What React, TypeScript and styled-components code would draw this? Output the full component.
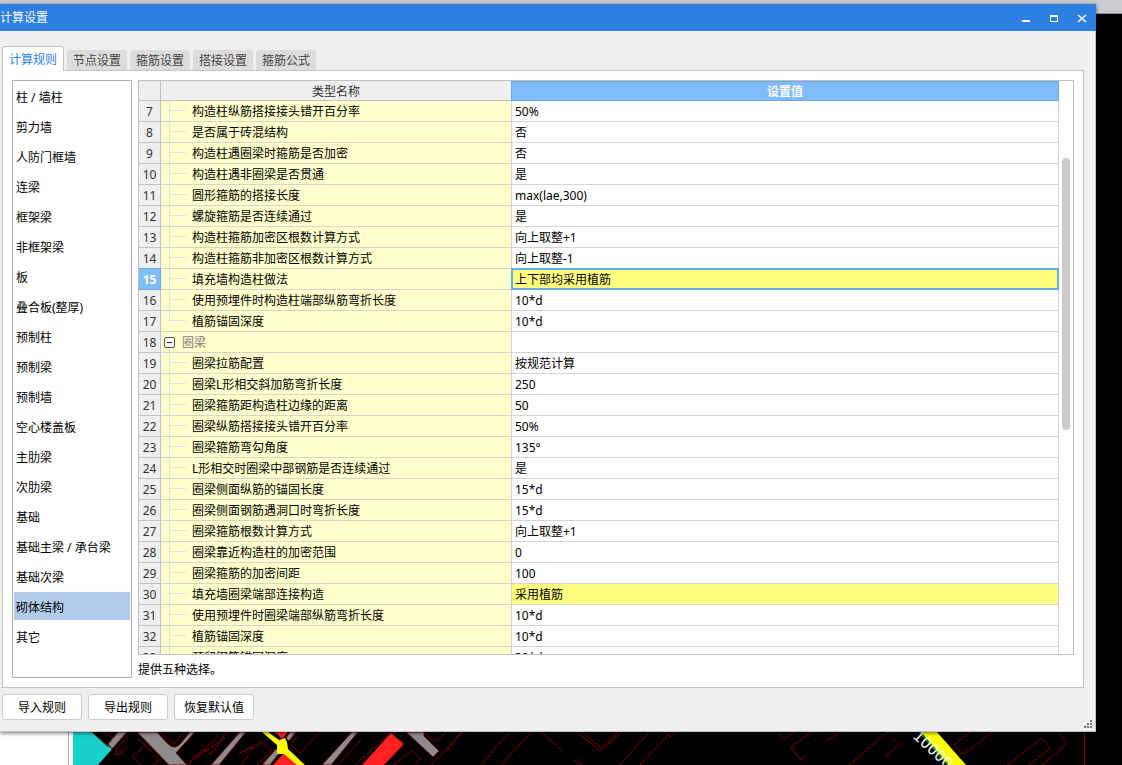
import React from "react";
import styled, { createGlobalStyle, css } from "styled-components";

const Global = createGlobalStyle`
  * { box-sizing: border-box; }
  html, body { margin: 0; height: 100%; }
  body, button, table {
    font-family: "Noto Sans", "Noto Sans CJK SC", sans-serif;
    font-size: 12px;
    line-height: 16px;
    color: #000;
  }
  button { margin: 0; padding: 0; border: 0; background: none; }
`;

const Desktop = styled.div`
  display: flex;
  flex-direction: column;
  height: 100vh;
  min-height: 400px;
  overflow: hidden;
  background: linear-gradient(#c9ccd1 0 13px, #8f9194 13px 14px, #000 14px);
`;

const Dialog = styled.section`
  flex: 1;
  min-height: 0;
  display: flex;
  flex-direction: column;
  margin: 4px 26px 0 0;
  background: #efefef;
  box-shadow: 0 1px 4px rgba(0, 0, 0, 0.6);
  position: relative;
`;

const TitleBar = styled.header`
  display: flex;
  align-items: center;
  justify-content: space-between;
  height: 27px;
  flex: none;
  padding-right: 8px;
  background: #2d80e2;
  color: #fff;
`;

const Title = styled.h1`
  margin: 0;
  font-size: 12px;
  font-weight: 400;
`;

const WindowButtons = styled.div`
  display: flex;
  gap: 16px;
`;

const WindowButton = styled.button`
  width: 12px;
  height: 12px;
  svg { display: block; }
`;

const Body = styled.div`
  flex: 1;
  min-height: 0;
  display: flex;
  flex-direction: column;
  padding: 15px 11px 11px 2px;
  border: solid #bfc3ca;
  border-width: 0 1px 1px 0;
`;

const Tabs = styled.div`
  display: flex;
  align-items: flex-end;
  gap: 3px;
`;

const Tab = styled.button<{ $active?: boolean }>`
  width: 60px;
  height: 20px;
  padding-top: 2px;
  border-radius: 3px 3px 0 0;
  background: #dcdcdc;
  color: #444;
  ${(p) =>
    p.$active &&
    css`
      width: 62px;
      height: 25px;
      margin-bottom: -1px;
      border: 1px solid #c0c3cb;
      border-bottom: 0;
      background: #fff;
      color: #2d80e2;
      z-index: 1;
    `}
`;

const Panel = styled.div`
  flex: 1;
  min-height: 0;
  display: flex;
  gap: 6px;
  padding: 9px;
  border: 1px solid #c3c5cb;
  background: #fff;
`;

const Sidebar = styled.nav`
  flex: none;
  display: flex;
  flex-direction: column;
  gap: 2px;
  width: 120px;
  padding: 1px;
  border: 1px solid #adadad;
  overflow: hidden;
`;

const SidebarItem = styled.button<{ $selected: boolean }>`
  flex: none;
  height: 28px;
  padding: 3px 2px 0;
  text-align: left;
  white-space: nowrap;
  background: ${(p) => (p.$selected ? "#b1cbec" : "transparent")};
`;

const Content = styled.div`
  flex: 1;
  min-width: 0;
  display: flex;
  flex-direction: column;
`;

const GridFrame = styled.div`
  flex: 1;
  min-height: 0;
  display: flex;
  border: 1px solid #c0c0c0;
`;

const GridView = styled.div`
  flex: 1;
  min-width: 0;
  overflow: hidden;
`;

const Table = styled.table`
  width: 100%;
  table-layout: fixed;
  border-collapse: separate;
  border-spacing: 0;
`;

const NumberCol = styled.col`
  width: 22px;
`;

const NameCol = styled.col`
  width: 351px;
`;

const HeadCell = styled.th<{ $current?: boolean }>`
  height: 20px;
  padding: 2px 0 0;
  border: solid #c2c2c2;
  border-width: 0 1px 1px 0;
  background: #efefef;
  color: #333;
  font-weight: 400;
  ${(p) =>
    p.$current &&
    css`
      border-color: #68a9e8;
      background: #80bbfa;
      box-shadow: -1px 0 #68a9e8, inset 0 1px #68a9e8;
      color: #fff;
      font-weight: 700;
    `}
`;

const RowNumber = styled.th<{ $current: boolean }>`
  height: 21px;
  padding: 1px 0 0;
  border: solid #c2c2c2;
  border-width: 0 1px 1px 0;
  background: #efefef;
  color: #333;
  font-weight: 400;
  ${(p) =>
    p.$current &&
    css`
      border-color: #68a9e8;
      background: #80bbfa;
      box-shadow: 0 -1px #68a9e8;
      color: #fff;
      font-weight: 700;
    `}
`;

const line = "linear-gradient(#e0e0e4, #e0e0e4) no-repeat";

const branches = {
  middle: `${line} 8px 0 / 1px 100%, ${line} 8px 9px / 17px 1px, #ffffcc`,
  last: `${line} 8px 0 / 1px 10px, ${line} 8px 9px / 17px 1px, #ffffcc`,
  group: `${line} 8px 16px / 1px 5px, #ffffcc`,
};

const NameCell = styled.td<{ $branch: keyof typeof branches }>`
  height: 21px;
  padding: 1px 0 0 ${(p) => (p.$branch === "group" ? 3 : 31)}px;
  border: solid #d4d4d4;
  border-width: 0 1px 1px 0;
  background: ${(p) => branches[p.$branch]};
  white-space: nowrap;
  overflow: hidden;
`;

const Group = styled.div`
  display: flex;
  align-items: center;
  gap: 7px;
  color: #808080;
`;

const Toggle = styled.button`
  width: 11px;
  height: 11px;
  border: 1px solid #555;
  border-radius: 2px;
  background: #fff;
  svg { display: block; }
`;

const ValueCell = styled.td<{ $changed: boolean; $current: boolean }>`
  height: 21px;
  padding: 1px 0 0 3px;
  border: solid #d4d4d4;
  border-width: 0 1px 1px 0;
  background: ${(p) => (p.$changed ? "#ffff80" : "#fff")};
  white-space: nowrap;
  ${(p) =>
    p.$current &&
    css`
      position: relative;
      &::after {
        content: "";
        position: absolute;
        inset: -1px;
        border: 2px solid #68a9e8;
      }
    `}
`;

const ScrollTrack = styled.div`
  flex: none;
  width: 14px;
  padding: 77px 3px 0;
`;

const ScrollThumb = styled.div`
  width: 8px;
  height: 272px;
  border-radius: 4px;
  background: #cbcbcb;
`;

const Hint = styled.p`
  flex: none;
  margin: 0;
  padding: 7px 0 0;
`;

const Actions = styled.div`
  display: flex;
  gap: 6px;
  padding-top: 6px;
`;

const ActionButton = styled.button`
  width: 80px;
  height: 26px;
  padding-top: 2px;
  border: 1px solid #c9ccd1;
  border-radius: 3px;
  background: #fff;
`;

const Grip = styled.svg`
  position: absolute;
  right: 4px;
  bottom: 4px;
`;

const Backdrop = styled.div`
  flex: none;
  display: flex;
  height: 33px;
`;

const SidePane = styled.div`
  flex: none;
  width: 73px;
  padding-right: 4px;
  background: #fff;
  &::before {
    content: "";
    display: block;
    height: 100%;
    border-right: 1px solid #b0b0b0;
  }
`;

const Drawing = styled.svg`
  flex: 1;
  min-width: 0;
  height: 33px;
  background: #000;
`;

const categories = [
  "柱 / 墙柱", "剪力墙", "人防门框墙", "连梁", "框架梁", "非框架梁", "板",
  "叠合板(整厚)", "预制柱", "预制梁", "预制墙", "空心楼盖板", "主肋梁", "次肋梁",
  "基础", "基础主梁 / 承台梁", "基础次梁", "砌体结构", "其它",
];

type Row = { name: string; value: string; changed?: boolean; branch?: keyof typeof branches };

const FIRST_ROW = 7;
const CURRENT_ROW = 15;

const rows: Row[] = [
  { name: "构造柱纵筋搭接接头错开百分率", value: "50%" },
  { name: "是否属于砖混结构", value: "否" },
  { name: "构造柱遇圈梁时箍筋是否加密", value: "否" },
  { name: "构造柱遇非圈梁是否贯通", value: "是" },
  { name: "圆形箍筋的搭接长度", value: "max(lae,300)" },
  { name: "螺旋箍筋是否连续通过", value: "是" },
  { name: "构造柱箍筋加密区根数计算方式", value: "向上取整+1" },
  { name: "构造柱箍筋非加密区根数计算方式", value: "向上取整-1" },
  { name: "填充墙构造柱做法", value: "上下部均采用植筋", changed: true },
  { name: "使用预埋件时构造柱端部纵筋弯折长度", value: "10*d" },
  { name: "植筋锚固深度", value: "10*d", branch: "last" },
  { name: "圈梁", value: "", branch: "group" },
  { name: "圈梁拉筋配置", value: "按规范计算" },
  { name: "圈梁L形相交斜加筋弯折长度", value: "250" },
  { name: "圈梁箍筋距构造柱边缘的距离", value: "50" },
  { name: "圈梁纵筋搭接接头错开百分率", value: "50%" },
  { name: "圈梁箍筋弯勾角度", value: "135°" },
  { name: "L形相交时圈梁中部钢筋是否连续通过", value: "是" },
  { name: "圈梁侧面纵筋的锚固长度", value: "15*d" },
  { name: "圈梁侧面钢筋遇洞口时弯折长度", value: "15*d" },
  { name: "圈梁箍筋根数计算方式", value: "向上取整+1" },
  { name: "圈梁靠近构造柱的加密范围", value: "0" },
  { name: "圈梁箍筋的加密间距", value: "100" },
  { name: "填充墙圈梁端部连接构造", value: "采用植筋", changed: true },
  { name: "使用预埋件时圈梁端部纵筋弯折长度", value: "10*d" },
  { name: "植筋锚固深度", value: "10*d" },
  { name: "预留钢筋锚固深度", value: "30*d" },
];

function SitePlan() {
  return (
    <Drawing viewBox="73 732 1049 33" preserveAspectRatio="xMinYMin slice" aria-hidden="true">
      <path d="M73 732H92L107 745L112 749L98 765H73Z" fill="#18d0c8" />
      <g fill="#8c8c8c" stroke="#7a0000" strokeWidth="1">
        <path d="M137 732H157L167 743Q175 751 181 743L190 732H195L176 753L187 765H169Z" />
        <path d="M118 732H127L112 749L108 744Z" />
        <path d="M240 732H246L219 765H211Z" />
        <path d="M352 732H358L331 765H322Z" />
        <path d="M406 732H424V736L439 751L433 757Z" />
        <path d="M280 752L270 765H262L276 749Z" />
        <path d="M290 732H296L289 741L286 738Z" />
      </g>
      <path d="M275 732H288L282 739ZM391 733L404 744L384 765H362Z" fill="#ff2020" />
      <path d="M284 753L289 753L301 765H273Z" fill="#ff2020" />
      <path d="M262 732H268L279 740L285 738L287 742L288 749L305 765H297L284 754H277V745Z" fill="#ffff00" />
      <path d="M921 732H937L966 765H948Z" fill="#ffff00" />
      <path d="M920 732L948 765" stroke="#17852a" strokeWidth="2" fill="none" />
      <g fill="none" stroke="#800000" strokeWidth="1">
        <path d="M92 732L108 747M104 732L113 738L118 732M138 739L145 745L132 757L141 765M128 736L117 748L115 755L121 753L127 747M119 750L124 755M145 745L159 760L154 765M138 752L145 745M160 732L174 744L184 732M188 765L203 748L211 755L226 732M190 761L225 738M197 758L218 735M239 753L254 747L241 765M240 753L262 742L272 750L257 765" />
        <path d="M297 736L291 745L300 753L320 732M338 765L361 740M355 765L392 732M425 732L435 742L446 732M393 765L412 751L421 759L414 765M431 765L463 732M447 751L461 732" />
        <path d="M481 765L509 732M501 765L531 732M541 732L563 751M574 760L582 765M577 732L600 751L622 732M583 732L601 748L618 732M620 765L649 732M640 765L671 732M664 732L670 737L675 732" />
        <path d="M778 732L784 739L794 732M812 732L791 747L801 760L806 756M815 740L816 740M826 741L840 732M849 765L888 732M885 756L901 743M893 739L895 740M954 745L963 755L992 732M954 745L970 732M1007 765L1042 738L1050 748L1029 765M1042 765L1067 744L1058 732M1084.500 732V765" />
      </g>
      <text x="912" y="737" transform="rotate(43 912 737)" fill="#fff" fontSize="15" fontFamily="DejaVu Sans, sans-serif">
        10000
      </text>
    </Drawing>
  );
}

export default function App() {
  return (
    <>
      <Global />
      <Desktop>
        <Dialog aria-label="计算设置">
          <TitleBar>
            <Title>计算设置</Title>
            <WindowButtons>
              <WindowButton aria-label="最小化">
                <svg width="12" height="12"><path d="M2 8h8v2H2z" fill="#fff" /></svg>
              </WindowButton>
              <WindowButton aria-label="最大化">
                <svg width="12" height="12"><path fillRule="evenodd" d="M2 3h8v7H2zM3 5v4h6V5z" fill="#fff" /></svg>
              </WindowButton>
              <WindowButton aria-label="关闭">
                <svg width="12" height="12"><path d="M2 3L10 10M10 3L2 10" stroke="#fff" strokeWidth="1.500" /></svg>
              </WindowButton>
            </WindowButtons>
          </TitleBar>
          <Body>
            <Tabs role="tablist">
              <Tab role="tab" aria-selected $active>计算规则</Tab>
              <Tab role="tab">节点设置</Tab>
              <Tab role="tab">箍筋设置</Tab>
              <Tab role="tab">搭接设置</Tab>
              <Tab role="tab">箍筋公式</Tab>
            </Tabs>
            <Panel role="tabpanel">
              <Sidebar>
                {categories.map((c) => (
                  <SidebarItem key={c} $selected={c === "砌体结构"}>{c}</SidebarItem>
                ))}
              </Sidebar>
              <Content>
                <GridFrame>
                  <GridView>
                    <Table>
                      <colgroup>
                        <NumberCol />
                        <NameCol />
                        <col />
                      </colgroup>
                      <thead>
                        <tr>
                          <HeadCell />
                          <HeadCell scope="col">类型名称</HeadCell>
                          <HeadCell scope="col" $current>设置值</HeadCell>
                        </tr>
                      </thead>
                      <tbody>
                        {rows.map((r, i) => {
                          const n = FIRST_ROW + i;
                          const current = n === CURRENT_ROW;
                          return (
                            <tr key={n}>
                              <RowNumber scope="row" $current={current}>{n}</RowNumber>
                              <NameCell $branch={r.branch ?? "middle"}>
                                {r.branch === "group" ? (
                                  <Group>
                                    <Toggle aria-label="折叠" aria-expanded>
                                      <svg width="9" height="9"><path d="M2 4h5v1H2z" fill="#222" /></svg>
                                    </Toggle>
                                    {r.name}
                                  </Group>
                                ) : (
                                  r.name
                                )}
                              </NameCell>
                              <ValueCell $changed={!!r.changed} $current={current}>{r.value}</ValueCell>
                            </tr>
                          );
                        })}
                      </tbody>
                    </Table>
                  </GridView>
                  <ScrollTrack>
                    <ScrollThumb />
                  </ScrollTrack>
                </GridFrame>
                <Hint>提供五种选择。</Hint>
              </Content>
            </Panel>
            <Actions>
              <ActionButton>导入规则</ActionButton>
              <ActionButton>导出规则</ActionButton>
              <ActionButton>恢复默认值</ActionButton>
            </Actions>
          </Body>
          <Grip width="8" height="8" aria-hidden="true">
            <path d="M6 0h2v2H6zM3 3h2v2H3zM6 3h2v2H6zM0 6h2v2H0zM3 6h2v2H3zM6 6h2v2H6z" fill="#70757d" />
          </Grip>
        </Dialog>
        <Backdrop>
          <SidePane />
          <SitePlan />
        </Backdrop>
      </Desktop>
    </>
  );
}
